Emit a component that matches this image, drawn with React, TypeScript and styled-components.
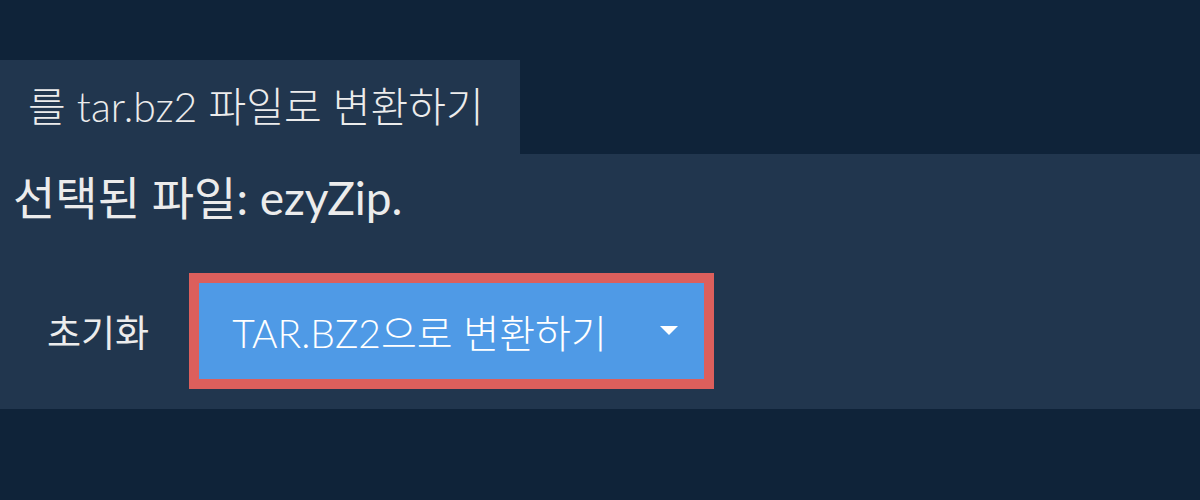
import React from "react";
import styled, { createGlobalStyle } from "styled-components";

const Global = createGlobalStyle`
  html, body { margin: 0; padding: 0; background: #0f2339; }
  body { font-family: Lato, "Noto Sans CJK KR", sans-serif; color: #ececec; }
`;

const Page = styled.div`
  width: 1200px;
  height: 500px;
  padding-top: 60px;
  box-sizing: border-box;
  background: #0f2339;
`;

const Tab = styled.div`
  width: 520px;
  height: 94px;
  box-sizing: border-box;
  padding: 0 0 6px 28px;
  display: flex;
  align-items: center;
  background: #21364e;
  font-family: Lato, "Noto Sans CJK KR", sans-serif;
  font-weight: 300;
  font-size: 41px;
  color: #ececec;
  white-space: nowrap;
`;

const Panel = styled.div`
  height: 255px;
  box-sizing: border-box;
  background: #21364e;
  padding: 16px 0 0 13px;
`;

const Heading = styled.h3`
  margin: 0;
  font-family: Lato, "Noto Sans CJK KR", sans-serif;
  font-weight: 400;
  font-size: 46px;
  line-height: 56px;
  color: #ececec;
  white-space: nowrap;
`;

const Row = styled.div`
  display: flex;
  align-items: center;
  margin-top: 57px;
  margin-left: -13px;
`;

const ResetButton = styled.button`
  background: transparent;
  border: none;
  padding: 0 40px 0 47px;
  font-family: Lato, "Noto Sans CJK KR", sans-serif;
  font-size: 37px;
  font-weight: 400;
  color: #ececec;
  cursor: pointer;
`;

const ConvertButton = styled.button`
  margin-left: 10px;
  width: 505px;
  height: 96px;
  box-sizing: border-box;
  background: #4f9ae6;
  border: none;
  outline: 10px solid #dc5f5c;
  display: flex;
  align-items: center;
  justify-content: space-between;
  padding: 0 26px 0 33px;
  font-family: Lato, "Noto Sans CJK KR", sans-serif;
  font-weight: 300;
  font-size: 39px;
  color: #ffffff;
  cursor: pointer;
`;

const Caret = styled.span`
  width: 0;
  height: 0;
  margin-bottom: 2px;
  border-left: 9px solid transparent;
  border-right: 9px solid transparent;
  border-top: 9px solid #ffffff;
`;

export default function App() {
  return (
    <Page>
      <Global />
      <Tab>를 tar.bz2 파일로 변환하기</Tab>
      <Panel>
        <Heading>선택된 파일: ezyZip.</Heading>
        <Row>
          <ResetButton>초기화</ResetButton>
          <ConvertButton>
            <span>TAR.BZ2으로 변환하기</span>
            <Caret />
          </ConvertButton>
        </Row>
      </Panel>
    </Page>
  );
}
